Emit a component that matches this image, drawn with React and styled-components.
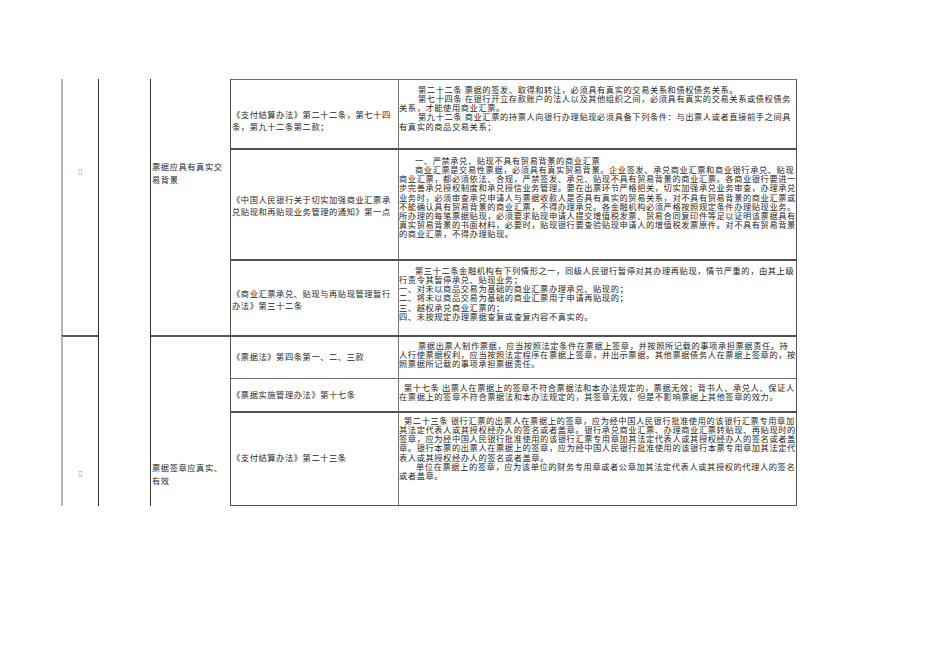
import React from 'react';
import styled, { createGlobalStyle } from 'styled-components';

const Global = createGlobalStyle`
  html, body { margin: 0; padding: 0; background: #ffffff; }
  body { font-family: "Liberation Serif", "Noto Sans CJK SC", serif; color: #222; }
`;

const Page = styled.div`
  width: 950px;
  height: 672px;
  box-sizing: border-box;
  padding: 79px 0 0 61px;
  background: #fff;
`;

const Sheet = styled.div`
  display: grid;
  grid-template-columns: 37px 52px 80px 168px 399px;
  grid-template-rows: 69px 111px 76px 43px 33px 95px;
  font-family: "Liberation Serif", "Noto Sans CJK SC", serif;
  font-size: 8.25px;
  letter-spacing: 0.57px;
  color: #262626;
`;

const IndexCell = styled.div`
  grid-column: 1;
  grid-row: ${p => p.$row} / span ${p => p.$span};
  box-sizing: border-box;
  border-left: 2px solid #b8b8b8;
  border-top: ${p => (p.$first ? 'none' : '2px solid #555')};
  padding-top: ${p => p.$pad}px;
  text-align: center;
`;

const Tofu = styled.span`
  font-family: "DejaVu Sans", sans-serif;
  font-size: 8px;
  letter-spacing: 0;
  line-height: 12px;
  color: #a0a0a0;
`;

const BlankCell = styled.div`
  grid-column: 2;
  grid-row: 1 / span 6;
  box-sizing: border-box;
  border-left: 1px solid #333;
`;

const TopicCell = styled.div`
  grid-column: 3;
  grid-row: ${p => p.$row} / span ${p => p.$span};
  box-sizing: border-box;
  border-left: 1px solid #333;
  border-top: ${p => (p.$first ? 'none' : '2px solid #555')};
  padding: ${p => p.$pad}px 0 0 1px;
  line-height: 12.5px;
  overflow: hidden;
`;

const SourceCell = styled.div`
  grid-column: 4;
  grid-row: ${p => p.$row};
  box-sizing: border-box;
  border-left: 1px solid #555;
  border-top: ${p => p.$top}px solid ${p => (p.$top > 1 ? '#505050' : '#707070')};
  border-bottom: ${p => (p.$last ? '1px solid #555' : 'none')};
  padding: ${p => p.$pad}px 0 0 1px;
  line-height: 11.5px;
  overflow: hidden;
`;

const ContentCell = styled.div`
  grid-column: 5;
  grid-row: ${p => p.$row};
  box-sizing: border-box;
  border-left: 1px solid #777;
  border-right: 1px solid #555;
  border-top: ${p => p.$top}px solid ${p => (p.$top > 1 ? '#505050' : '#707070')};
  border-bottom: ${p => (p.$last ? '1px solid #555' : 'none')};
  padding: ${p => p.$pad}px 0 0 0;
  overflow: hidden;
`;

const Line = styled.div`
  white-space: pre;
  line-height: 9.15px;
  height: 9.15px;
  padding-left: ${p => p.$indent || 0}px;
`;

const SrcLine = styled.div`
  white-space: pre;
`;

const groups = [
  { row: 1, span: 3, first: true, glyphPad: 87, topicPad: 83, topic: ['票据应具有真实交', '易背景'] },
  { row: 4, span: 3, first: false, glyphPad: 131, topicPad: 126, topic: ['票据签章应真实、', '有效'] },
];

const rows = [
  {
    top: 1, srcPad: 30, cPad: 6,
    source: ['《支付结算办法》第二十二条，第七十四', '条，第九十二条第二款；'],
    content: [
      [19, '第二十二条 票据的签发、取得和转让，必须具有真实的交易关系和债权债务关系。'],
      [19, '第七十四条 在银行开立存款账户的法人以及其他组织之间，必须具有真实的交易关系或债权债务'],
      [0, '关系，才能使用商业汇票。'],
      [19, '第九十二条 商业汇票的持票人向银行办理贴现必须具备下列条件：与出票人或者直接前手之间具'],
      [0, '有真实的商品交易关系；'],
    ],
  },
  {
    top: 2, srcPad: 45, cPad: 7,
    source: ['《中国人民银行关于切实加强商业汇票承', '兑贴现和再贴现业务管理的通知》第一点'],
    content: [
      [16, '一、严禁承兑、贴现不具有贸易背景的商业汇票'],
      [16, '商业汇票是交易性票据，必须具有真实贸易背景。企业签发、承兑商业汇票和商业银行承兑、贴现'],
      [0, '商业汇票，都必须依法、合规，严禁签发、承兑、贴现不具有贸易背景的商业汇票。各商业银行要进一'],
      [0, '步完善承兑授权制度和承兑授信业务管理。要在出票环节严格把关，切实加强承兑业务审查，办理承兑'],
      [0, '业务时，必须审查承兑申请人与票据收款人是否具有真实的贸易关系，对不具有贸易背景的商业汇票或'],
      [0, '不能确认具有贸易背景的商业汇票，不得办理承兑。各金融机构必须严格按照规定条件办理贴现业务。'],
      [0, '所办理的每笔票据贴现，必须要求贴现申请人提交增值税发票、贸易合同复印件等足以证明该票据具有'],
      [0, '真实贸易背景的书面材料，必要时，贴现银行要查验贴现申请人的增值税发票原件。对不具有贸易背景'],
      [0, '的商业汇票，不得办理贴现。'],
    ],
  },
  {
    top: 2, srcPad: 28, cPad: 6,
    source: ['《商业汇票承兑、贴现与再贴现管理暂行', '办法》第三十二条'],
    content: [
      [16, '第三十二条金融机构有下列情形之一，同级人民银行暂停对其办理再贴现，情节严重的，由其上级'],
      [0, '行责令其暂停承兑、贴现业务；'],
      [0, '一、对未以商品交易为基础的商业汇票办理承兑、贴现的；'],
      [0, '二、将未以商品交易为基础的商业汇票用于申请再贴现的；'],
      [0, '三、越权承兑商业汇票的；'],
      [0, '四、未按规定办理票据查复或查复内容不真实的。'],
    ],
  },
  {
    top: 2, srcPad: 15, cPad: 5,
    source: ['《票据法》第四条第一、二、三款'],
    content: [
      [19, '票据出票人制作票据，应当按照法定条件在票据上签章，并按照所记载的事项承担票据责任。持'],
      [0, '人行使票据权利，应当按照法定程序在票据上签章，并出示票据。其他票据债务人在票据上签章的，按'],
      [0, '照票据所记载的事项承担票据责任。'],
    ],
  },
  {
    top: 1, srcPad: 11, cPad: 5,
    source: ['《票据实施管理办法》第十七条'],
    content: [
      [5, '第十七条 出票人在票据上的签章不符合票据法和本办法规定的，票据无效；背书人、承兑人、保证人'],
      [0, '在票据上的签章不符合票据法和本办法规定的，其签章无效，但是不影响票据上其他签章的效力。'],
    ],
  },
  {
    top: 2, srcPad: 40, cPad: 4,
    source: ['《支付结算办法》第二十三条'],
    content: [
      [5, '第二十三条 银行汇票的出票人在票据上的签章，应为经中国人民银行批准使用的该银行汇票专用章加'],
      [0, '其法定代表人或其授权经办人的签名或者盖章。银行承兑商业汇票、办理商业汇票转贴现、再贴现时的'],
      [0, '签章，应为经中国人民银行批准使用的该银行汇票专用章加其法定代表人或其授权经办人的签名或者盖'],
      [0, '章。银行本票的出票人在票据上的签章，应为经中国人民银行批准使用的该银行本票专用章加其法定代'],
      [0, '表人或其授权经办人的签名或者盖章。'],
      [17, '单位在票据上的签章，应为该单位的财务专用章或者公章加其法定代表人或其授权的代理人的签名'],
      [0, '或者盖章。'],
    ],
  },
];

export default function App() {
  return (
    <>
      <Global />
      <Page>
        <Sheet>
          {groups.map(g => (
            <React.Fragment key={'g' + g.row}>
              <IndexCell $row={g.row} $span={g.span} $first={g.first} $pad={g.glyphPad}>
                <Tofu>▯</Tofu>
              </IndexCell>
              <TopicCell $row={g.row} $span={g.span} $first={g.first} $pad={g.topicPad}>
                {g.topic.map((t, i) => (
                  <SrcLine key={i}>{t}</SrcLine>
                ))}
              </TopicCell>
            </React.Fragment>
          ))}
          <BlankCell />
          {rows.map((r, i) => (
            <React.Fragment key={'r' + i}>
              <SourceCell $row={i + 1} $top={r.top} $pad={r.srcPad} $last={i === rows.length - 1}>
                {r.source.map((s, j) => (
                  <SrcLine key={j}>{s}</SrcLine>
                ))}
              </SourceCell>
              <ContentCell $row={i + 1} $top={r.top} $pad={r.cPad} $last={i === rows.length - 1}>
                {r.content.map(([indent, text], j) => (
                  <Line key={j} $indent={indent}>{text}</Line>
                ))}
              </ContentCell>
            </React.Fragment>
          ))}
        </Sheet>
      </Page>
    </>
  );
}
